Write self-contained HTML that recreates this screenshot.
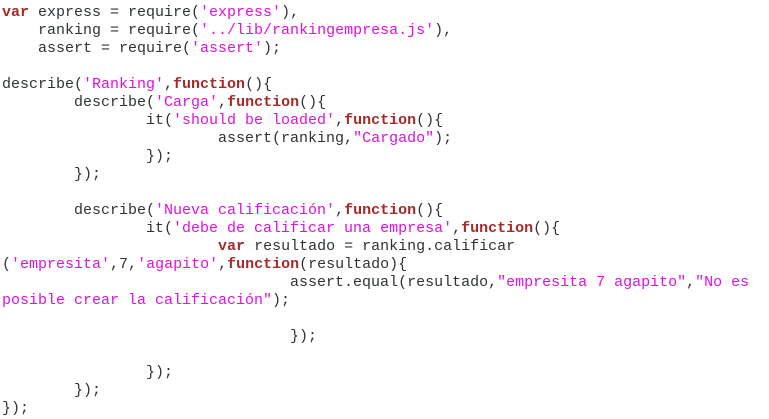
<!DOCTYPE html>
<html><head><meta charset="utf-8"><style>
html,body{margin:0;padding:0;background:#fff;width:769px;height:419px;overflow:hidden}
pre{margin:0;padding:4px 0 0 2px;font-family:"Liberation Mono","DejaVu Sans Mono",monospace;font-size:15px;line-height:18px;color:#2e3436;white-space:pre}
.k{color:#a52a2a;font-weight:bold}
.s{color:#e010e0}
</style></head><body><pre><span class="k">var</span> express = require(<span class="s">'express'</span>),
    ranking = require(<span class="s">'../lib/rankingempresa.js'</span>),
    assert = require(<span class="s">'assert'</span>);

describe(<span class="s">'Ranking'</span>,<span class="k">function</span>(){
        describe(<span class="s">'Carga'</span>,<span class="k">function</span>(){
                it(<span class="s">'should be loaded'</span>,<span class="k">function</span>(){
                        assert(ranking,<span class="s">"Cargado"</span>);
                });
        });

        describe(<span class="s">'Nueva calificación'</span>,<span class="k">function</span>(){
                it(<span class="s">'debe de calificar una empresa'</span>,<span class="k">function</span>(){
                        <span class="k">var</span> resultado = ranking.calificar
(<span class="s">'empresita'</span>,7,<span class="s">'agapito'</span>,<span class="k">function</span>(resultado){
                                assert.equal(resultado,<span class="s">"empresita 7 agapito"</span>,<span class="s">"No es
posible crear la calificación"</span>);

                                });

                });
        });
});</pre></body></html>
